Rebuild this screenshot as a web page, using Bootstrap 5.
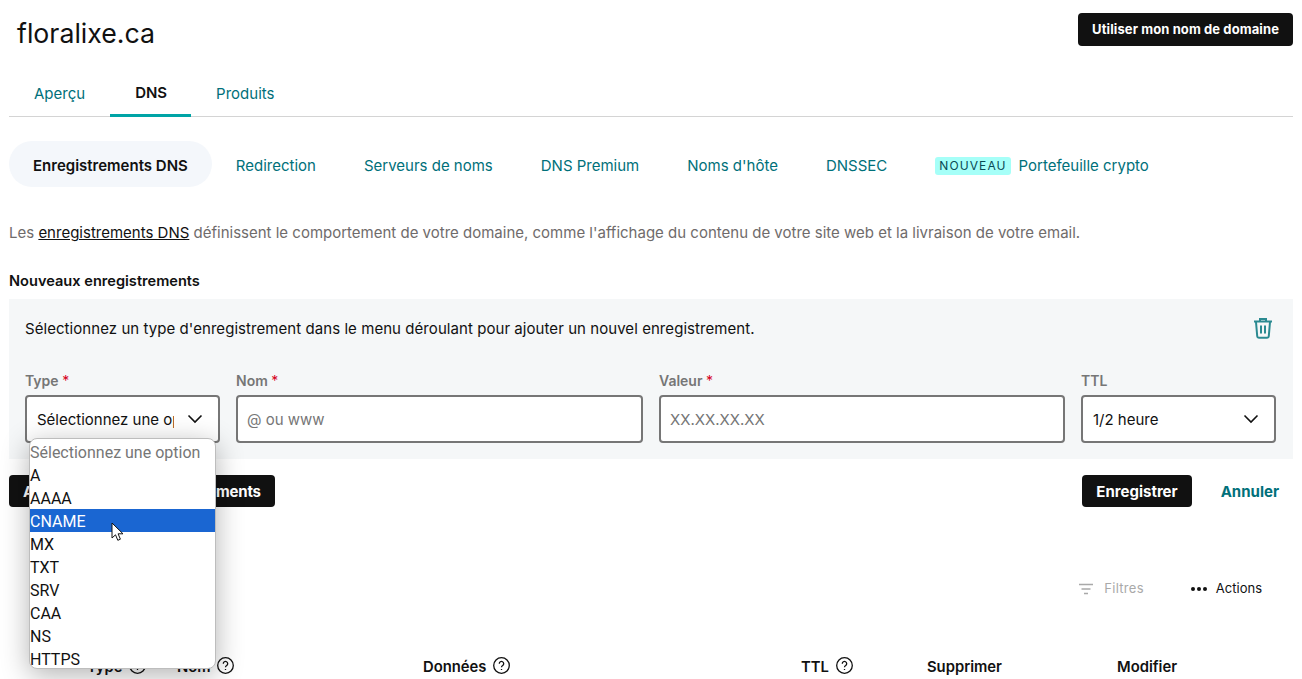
<!DOCTYPE html>
<html lang="fr">
<head>
    <meta charset="UTF-8" />
    <meta name="viewport" content="width=device-width, initial-scale=1.0" />
    <title>floralixe.ca - DNS</title>
    <link href="https://cdn.jsdelivr.net/npm/bootstrap@5.3.0/dist/css/bootstrap.min.css" rel="stylesheet">
    <style>
        html, body { height: 679px; overflow: hidden; }
        body { font-family: Inter, "Liberation Sans", sans-serif; font-size: 15px; color: #111; background: #fff; }
        .page-wrap { padding: 0 9px; }
        .head-row { height: 59px; padding-top: 13px; }
        .site-title { font-size: 26.700px; font-weight: 400; margin: 0 0 0 8px; line-height: 40px; color: #111; }
        .btn-dark-gd { background: #111; color: #fff; font-weight: 700; font-size: 15px; height: 32px; padding: 2px 14px 0; border: 0; border-radius: 4px; }
        .btn-dark-gd:hover { background: #111; color: #fff; }
        .btn-top { font-size: 13px; letter-spacing: .1px; height: 33px; padding-top: 1px; }
        .btn-more { letter-spacing: -.17px; }
        .top-tabs { height: 45px; border-bottom: 1px solid #d4d4d4; margin-top: 13px; }
        .top-tabs a { display: block; padding: 0 25px; height: 45px; line-height: 43px; color: #00707a; text-decoration: none; }
        .top-tabs a.on { color: #111; font-weight: 600; padding-right: 24px; border-bottom: 3px solid #00a4a6; margin-bottom: -1px; line-height: 41px; }
        .sub-tabs { margin-top: 24px; height: 46px; }
        .sub-tabs a { padding: 0 24px; line-height: 50px; color: #00707a; text-decoration: none; white-space: nowrap; }
        .sub-tabs a.on { background: #f4f7fb; color: #111; font-weight: 600; border-radius: 23px; }
        .tag-new { display: inline-block; background: #a6fff8; color: #094a55; font-size: 12px; letter-spacing: 1.1px; line-height: 18px; padding: 0 4px; border-radius: 3px; margin-right: 8px; vertical-align: 1px; }
        .intro { margin: 35px 0 0; line-height: 22px; color: #6f6b6b; }
        .intro a { color: #111; }
        .new-title { margin: 26px 0 7px; font-size: 14.600px; font-weight: 600; line-height: 22px; }
        .new-panel { background: #f5f7f8; height: 160px; padding: 19px 16px 16px; }
        .panel-top { height: 34px; line-height: 22px; letter-spacing: .06px; }
        .trash-btn { margin-right: 4px; margin-top: -1px; }
        .field-grid { display: grid; grid-template-columns: 195px 407px 406px 195px; gap: 16px; margin-top: 16px; }
        .field-grid label { display: block; font-size: 14px; font-weight: 600; color: #767676; line-height: 20px; margin-top: 3px; margin-bottom: 4px; }
        .req { color: #d6001c; font-weight: 400; }
        .gd-input { height: 48px; border: 2px solid #767676; border-radius: 4px; padding: 1px 9px 0; font-size: 15px; color: #111; box-shadow: none; }
        .gd-input::placeholder { color: #767676; }
        select.gd-input { padding: 2px 44px 0 10px; background-position: right 14px center; background-size: 18px 18px;
            background-image: url("data:image/svg+xml,%3csvg xmlns='http://www.w3.org/2000/svg' viewBox='0 0 18 18'%3e%3cpath fill='none' stroke='%23111' stroke-width='1.6' d='M2.5 5.5 9 12l6.5-6.500'/%3e%3c/svg%3e"); }
        .type-field { position: relative; }
        .type-menu { position: absolute; top: 70px; left: 4px; width: 187px; height: 231px; z-index: 5; margin: 0; padding: 1px 0 0; list-style: none; background: #fff;
            border: 1px solid #bdbdbd; border-radius: 8px; box-shadow: 0 6px 28px rgba(0,0,0,.3); overflow: hidden; font-family: Roboto, sans-serif; font-size: 16px; }
        .type-menu li { height: 23px; line-height: 25px; color: #111; }
        .type-menu li.hint { color: #767676; }
        .type-menu li.sel { background: #1a66d2; color: #fff; }
        .cursor-arrow { position: absolute; left: 86px; top: 154px; z-index: 6; }
        .act-row { margin-top: 16px; height: 32px; }
        .cancel-link { color: #00707a; font-weight: 700; text-decoration: none; margin: 3px 14px 0 29px; }
        .tool-row { margin-top: 67px; height: 30px; padding-right: 31px; font-size: 13px; }
        .tool-off { color: #a9a9a9; margin-right: 46px; letter-spacing: .3px; gap: 10px; }
        .head-cols { margin-top: 52px; padding-left: 78px; font-size: 14.800px; font-weight: 600; height: 24px; }
        .head-cols > div { flex: none; white-space: nowrap; }
        .c-type { width: 90px; } .c-nom { width: 246px; } .c-data { width: 378px; } .c-ttl { width: 126px; } .c-del { width: 190px; }
        .qmark { display: inline-block; vertical-align: -2px; margin-left: 3px; }
    </style>
</head>
<body>
    <div class="page-wrap">
        <!-- titre -->
        <div class="d-flex justify-content-between align-items-start head-row">
            <h1 class="site-title">floralixe.ca</h1>
            <button class="btn btn-dark-gd btn-top">Utiliser mon nom de domaine</button>
        </div>

        <!-- onglets -->
        <div class="d-flex top-tabs">
            <a href="#">Aperçu</a>
            <a href="#" class="on">DNS</a>
            <a href="#">Produits</a>
        </div>

        <div class="d-flex sub-tabs">
            <a href="#" class="on">Enregistrements DNS</a>
            <a href="#">Redirection</a>
            <a href="#">Serveurs de noms</a>
            <a href="#">DNS Premium</a>
            <a href="#">Noms d'hôte</a>
            <a href="#">DNSSEC</a>
            <a href="#"><span class="tag-new">NOUVEAU</span>Portefeuille crypto</a>
        </div>

        <p class="intro">Les <a href="#">enregistrements DNS</a> définissent le comportement de votre domaine, comme l'affichage du contenu de votre site web et la livraison de votre email.</p>

        <div class="new-title">Nouveaux enregistrements</div>
        <div class="new-panel">
            <div class="d-flex justify-content-between panel-top">
                <span>Sélectionnez un type d'enregistrement dans le menu déroulant pour ajouter un nouvel enregistrement.</span>
                <svg class="trash-btn" width="20" height="22" viewBox="0 0 20 22" fill="none" stroke="#2b8a91" stroke-width="2"><path d="M1 4.500h18M7 4V2h6v2M3 5l1.200 14a2 2 0 0 0 2 1.800h7.600a2 2 0 0 0 2-1.800L17 5M8 8.500v8M12 8.500v8"/></svg>
            </div>
            <div class="field-grid">
                <div class="type-field">
                    <label>Type <span class="req">*</span></label>
                    <select class="form-select gd-input"><option>Sélectionnez une option</option></select>
                    <ul class="type-menu">
                        <li class="hint">Sélectionnez une option</li>
                        <li>A</li>
                        <li>AAAA</li>
                        <li class="sel">CNAME</li>
                        <li>MX</li>
                        <li>TXT</li>
                        <li>SRV</li>
                        <li>CAA</li>
                        <li>NS</li>
                        <li>HTTPS</li>
                    </ul>
                    <svg class="cursor-arrow" width="14" height="20" viewBox="0 0 14 20"><path d="M1 1v15l3.500-3.200 2.300 5.500 2.600-1.100-2.300-5.400H12z" fill="#fff" stroke="#111" stroke-width="1"/></svg>
                </div>
                <div>
                    <label>Nom <span class="req">*</span></label>
                    <input class="form-control gd-input" placeholder="@ ou www">
                </div>
                <div>
                    <label>Valeur <span class="req">*</span></label>
                    <input class="form-control gd-input" placeholder="XX.XX.XX.XX">
                </div>
                <div>
                    <label>TTL</label>
                    <select class="form-select gd-input"><option>1/2 heure</option></select>
                </div>
            </div>
        </div>

        <div class="d-flex justify-content-between align-items-center act-row">
            <button class="btn btn-dark-gd btn-more">Ajouter d'autres enregistrements</button>
            <div class="d-flex align-items-center">
                <button class="btn btn-dark-gd">Enregistrer</button>
                <a href="#" class="cancel-link">Annuler</a>
            </div>
        </div>

        <div class="d-flex justify-content-end align-items-center tool-row">
            <span class="tool-off d-flex align-items-center">
                <svg width="16" height="12" viewBox="0 0 16 12" stroke="#a9a9a9" stroke-width="1.500"><path d="M1 1.500h14M3.500 6h9M6 10.500h4"/></svg>
                Filtres
            </span>
            <span class="d-flex align-items-center gap-2">
                <svg width="18" height="6" viewBox="0 0 18 6" fill="#111"><circle cx="3" cy="3" r="2"/><circle cx="9" cy="3" r="2"/><circle cx="15" cy="3" r="2"/></svg>
                Actions
            </span>
        </div>

        <div class="d-flex head-cols">
            <div class="c-type">Type <svg class="qmark" width="17" height="17" viewBox="0 0 17 17" fill="none" stroke="#111" stroke-width="1.300"><circle cx="8.500" cy="8.500" r="7.800"/><path d="M6.300 6.700a2.200 2.200 0 1 1 3.400 1.800c-.8.500-1.200 1-1.200 1.800M8.500 12v1"/></svg></div>
            <div class="c-nom">Nom <svg class="qmark" width="17" height="17" viewBox="0 0 17 17" fill="none" stroke="#111" stroke-width="1.300"><circle cx="8.500" cy="8.500" r="7.800"/><path d="M6.300 6.700a2.200 2.200 0 1 1 3.400 1.800c-.8.500-1.200 1-1.200 1.800M8.500 12v1"/></svg></div>
            <div class="c-data">Données <svg class="qmark" width="17" height="17" viewBox="0 0 17 17" fill="none" stroke="#111" stroke-width="1.300"><circle cx="8.500" cy="8.500" r="7.800"/><path d="M6.300 6.700a2.200 2.200 0 1 1 3.400 1.800c-.8.500-1.200 1-1.200 1.800M8.500 12v1"/></svg></div>
            <div class="c-ttl">TTL <svg class="qmark" width="17" height="17" viewBox="0 0 17 17" fill="none" stroke="#111" stroke-width="1.300"><circle cx="8.500" cy="8.500" r="7.800"/><path d="M6.300 6.700a2.200 2.200 0 1 1 3.400 1.800c-.8.500-1.200 1-1.200 1.800M8.500 12v1"/></svg></div>
            <div class="c-del">Supprimer</div>
            <div>Modifier</div>
        </div>
    </div>
    <script src="https://cdn.jsdelivr.net/npm/bootstrap@5.3.0/dist/js/bootstrap.bundle.min.js"></script>
</body>
</html>
